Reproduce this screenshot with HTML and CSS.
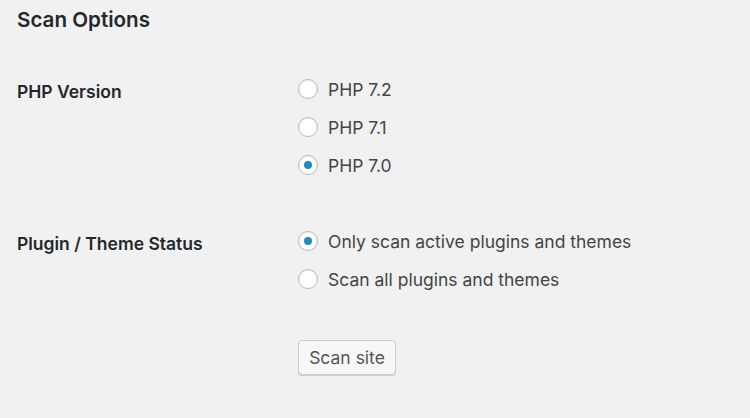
FILE: index.html
```html
<!DOCTYPE html>
<html>
<head>
<meta charset="utf-8">
<link rel="stylesheet" href="styles.css">
</head>
<body>
<div class="wrap">
  <h2 class="title">Scan Options</h2>
  <div class="form">
    <div class="row">
      <div class="label">PHP Version</div>
      <div class="field">
        <label class="opt"><span class="radio"></span><span>PHP 7.2</span></label>
        <label class="opt"><span class="radio"></span><span>PHP 7.1</span></label>
        <label class="opt"><span class="radio checked"></span><span>PHP 7.0</span></label>
      </div>
    </div>
    <div class="row row-status">
      <div class="label">Plugin / Theme Status</div>
      <div class="field">
        <label class="opt"><span class="radio checked"></span><span>Only scan active plugins and themes</span></label>
        <label class="opt"><span class="radio"></span><span>Scan all plugins and themes</span></label>
      </div>
    </div>
    <div class="row">
      <div class="label"></div>
      <div class="field">
        <button class="button">Scan site</button>
      </div>
    </div>
  </div>
</div>
</body>
</html>
```
FILE: styles.css
```css
html, body {
  margin: 0;
  padding: 0;
  background: #f1f1f1;
}
body {
  font-family: Inter, "Liberation Sans", Arial, sans-serif;
  color: #23282d;
}
.wrap {
  padding: 8px 0 0 17px;
}
.title {
  margin: 0;
  font-size: 20.6px;
  font-weight: 600;
  line-height: 24px;
  color: #23282d;
}
.form {
  display: flex;
  flex-direction: column;
  margin-top: 45px;
}
.row {
  display: grid;
  grid-template-columns: 281px 1fr;
  margin-bottom: 52px;
}
.row-status {
  margin-bottom: 42px;
}
.label {
  font-size: 17.5px;
  font-weight: 600;
  line-height: 24px;
  padding-top: 3px;
}
.field {
  display: flex;
  flex-direction: column;
  gap: 14px;
}
.opt {
  display: flex;
  align-items: center;
  gap: 10px;
  height: 24px;
  font-size: 17.5px;
  color: #444;
}
.radio {
  box-sizing: border-box;
  width: 20px;
  height: 20px;
  border: 1px solid #b4b9be;
  border-radius: 50%;
  background: #fff;
  box-shadow: inset 0 1px 2px rgba(0,0,0,0.07);
  display: flex;
  align-items: center;
  justify-content: center;
}
.radio.checked::after {
  content: "";
  width: 8px;
  height: 8px;
  border-radius: 50%;
  background: #1e8cbe;
}
.button {
  align-self: flex-start;
  margin-top: 7px;
  box-sizing: border-box;
  width: 98px;
  height: 35px;
  font-family: inherit;
  font-size: 17.5px;
  color: #555;
  background: #f7f7f7;
  border: 1px solid #ccc;
  border-radius: 4px;
  box-shadow: 0 1px 0 #ccc;
  padding: 0;
}
```
